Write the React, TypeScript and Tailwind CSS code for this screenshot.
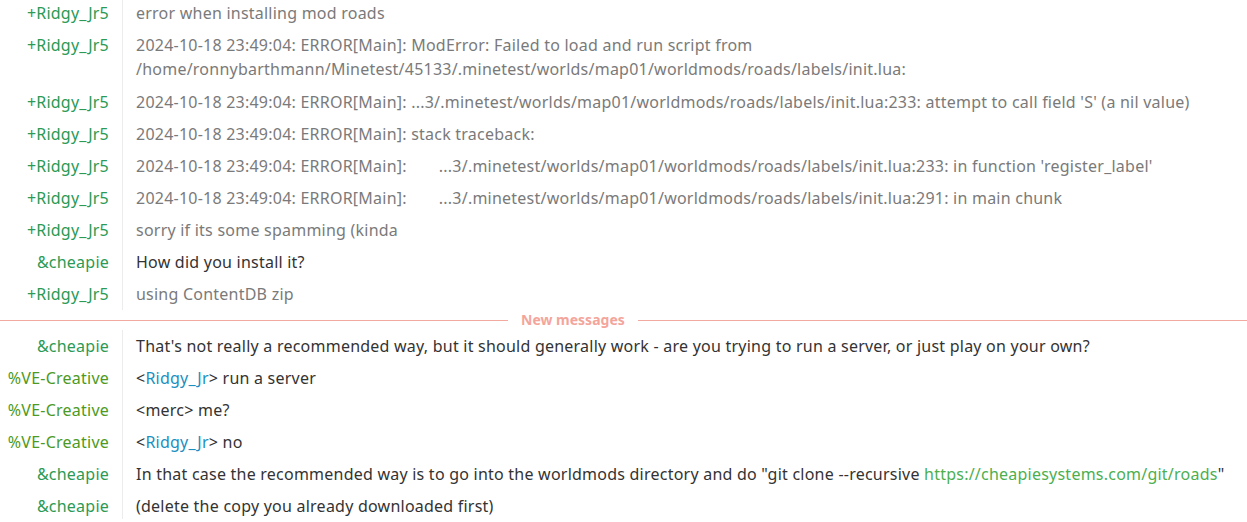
import React from "react"

type Part = string | { nick: string }

interface Msg {
  nick: string
  kind: "ridgy" | "cheapie" | "ve"
  text: React.ReactNode
  dim?: boolean
  tall?: boolean
}

const nickColor = {
  ridgy: "text-[#2a9a55]",
  cheapie: "text-[#2a9a55]",
  ve: "text-[#4c9a22]",
}

function Gap() {
  return <span className="inline-block w-[32px]" />
}

const before: Msg[] = [
  { nick: "+Ridgy_Jr5", kind: "ridgy", dim: true, text: "error when installing mod roads" },
  {
    nick: "+Ridgy_Jr5",
    kind: "ridgy",
    dim: true,
    tall: true,
    text: (
      <>
        2024-10-18 23:49:04: ERROR[Main]: ModError: Failed to load and run script from
        <br />
        /home/ronnybarthmann/Minetest/45133/.minetest/worlds/map01/worldmods/roads/labels/init.lua:
      </>
    ),
  },
  {
    nick: "+Ridgy_Jr5",
    kind: "ridgy",
    dim: true,
    text: "2024-10-18 23:49:04: ERROR[Main]: ...3/.minetest/worlds/map01/worldmods/roads/labels/init.lua:233: attempt to call field 'S' (a nil value)",
  },
  { nick: "+Ridgy_Jr5", kind: "ridgy", dim: true, text: "2024-10-18 23:49:04: ERROR[Main]: stack traceback:" },
  {
    nick: "+Ridgy_Jr5",
    kind: "ridgy",
    dim: true,
    text: (
      <>
        2024-10-18 23:49:04: ERROR[Main]:
        <Gap />
        ...3/.minetest/worlds/map01/worldmods/roads/labels/init.lua:233: in function 'register_label'
      </>
    ),
  },
  {
    nick: "+Ridgy_Jr5",
    kind: "ridgy",
    dim: true,
    text: (
      <>
        2024-10-18 23:49:04: ERROR[Main]:
        <Gap />
        ...3/.minetest/worlds/map01/worldmods/roads/labels/init.lua:291: in main chunk
      </>
    ),
  },
  { nick: "+Ridgy_Jr5", kind: "ridgy", dim: true, text: "sorry if its some spamming (kinda" },
  { nick: "&cheapie", kind: "cheapie", text: "How did you install it?" },
  { nick: "+Ridgy_Jr5", kind: "ridgy", dim: true, text: "using ContentDB zip" },
]

function Relay({ parts }: { parts: Part[] }) {
  return (
    <>
      {parts.map((p, i) =>
        typeof p === "string" ? (
          <span key={i}>{p}</span>
        ) : (
          <span key={i}>
            &lt;<span className="text-[#1b8fbf]">{p.nick}</span>&gt;
          </span>
        )
      )}
    </>
  )
}

const after: Msg[] = [
  {
    nick: "&cheapie",
    kind: "cheapie",
    text: "That's not really a recommended way, but it should generally work - are you trying to run a server, or just play on your own?",
  },
  { nick: "%VE-Creative", kind: "ve", text: <Relay parts={[{ nick: "Ridgy_Jr" }, " run a server"]} /> },
  { nick: "%VE-Creative", kind: "ve", text: "<merc> me?" },
  { nick: "%VE-Creative", kind: "ve", text: <Relay parts={[{ nick: "Ridgy_Jr" }, " no"]} /> },
  {
    nick: "&cheapie",
    kind: "cheapie",
    text: (
      <>
        In that case the recommended way is to go into the worldmods directory and do "git clone --recursive{" "}
        <span className="text-[#4caf50]">https://cheapiesystems.com/git/roads</span>"
      </>
    ),
  },
  { nick: "&cheapie", kind: "cheapie", text: "(delete the copy you already downloaded first)" },
]

function Row({ m }: { m: Msg }) {
  const pad = m.tall ? "pt-[4px] pb-[5px]" : "py-[4px]"
  return (
    <div className="flex">
      <div className={`w-[122px] shrink-0 pr-[13px] text-right ${pad} ${nickColor[m.kind]}`}>{m.nick}</div>
      <div
        className={`flex-1 border-l border-[#ececec] pl-[13px] ${pad} ${m.dim ? "text-[#7a7a7a]" : "text-[#333333]"}`}
      >
        {m.text}
      </div>
    </div>
  )
}

export default function App() {
  return (
    <div
      className="w-[1247px] h-[522px] overflow-hidden bg-white text-[16px] tracking-[0.23px] leading-[24px] -mt-[3px]"
      style={{ fontFamily: '"Noto Sans", sans-serif' }}
    >
      {before.map((m, i) => (
        <Row key={i} m={m} />
      ))}
      <div className="flex items-center h-[20px]">
        <div className="w-[508px] h-px bg-[#f2aaa0]" />
        <span className="px-[13px] text-[14px] tracking-normal font-bold text-[#f4a59b]">New messages</span>
        <div className="flex-1 h-px bg-[#f2aaa0]" />
      </div>
      {after.map((m, i) => (
        <Row key={i} m={m} />
      ))}
    </div>
  )
}
